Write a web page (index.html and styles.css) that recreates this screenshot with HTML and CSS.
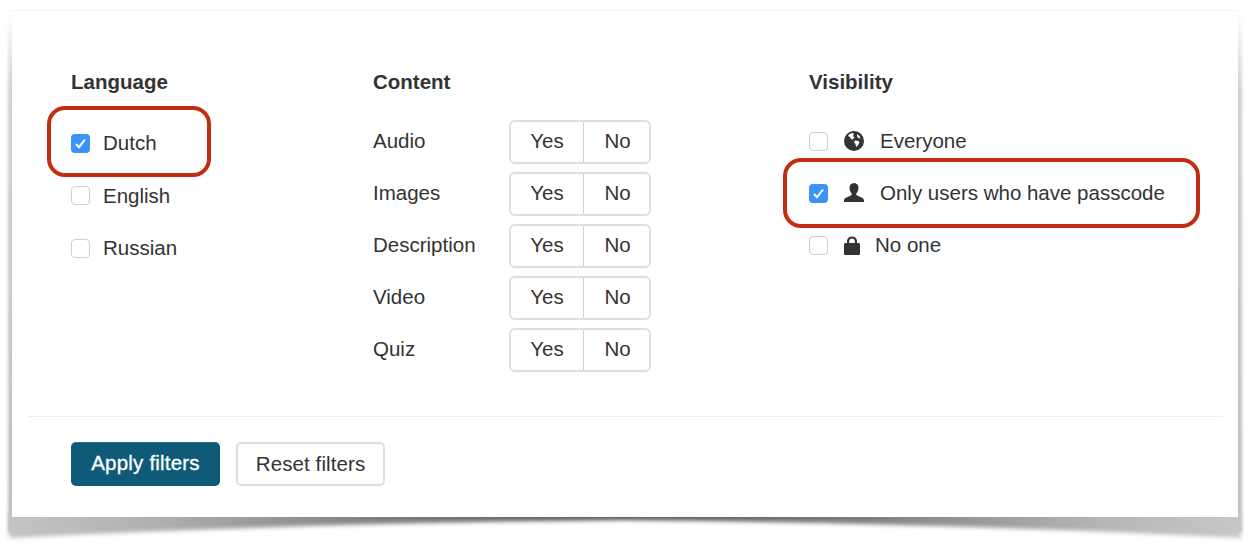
FILE: index.html
```html
<!DOCTYPE html>
<html lang="en">
<head>
<meta charset="utf-8">
<title>Filters</title>
<link rel="stylesheet" href="styles.css">
</head>
<body>
<div class="stage">
  <svg class="drop" width="1250" height="552" viewBox="0 0 1250 552" aria-hidden="true">
    <defs>
      <filter id="soft" x="-5%" y="-20%" width="110%" height="140%"><feGaussianBlur stdDeviation="2"/></filter>
      <filter id="softer" x="-100%" y="-5%" width="300%" height="110%"><feGaussianBlur stdDeviation="1.500"/></filter>
      <linearGradient id="fade" x1="0" x2="1" y1="0" y2="0">
        <stop offset="0" stop-color="#c4c4c4"/>
        <stop offset="0.12" stop-color="#b0b0b0"/>
        <stop offset="0.3" stop-color="#808080"/>
        <stop offset="0.5" stop-color="#505050"/>
        <stop offset="0.7" stop-color="#808080"/>
        <stop offset="0.88" stop-color="#b4b4b4"/>
        <stop offset="1" stop-color="#c8c8c8"/>
      </linearGradient>
      <linearGradient id="side" x1="0" x2="0" y1="0" y2="1">
        <stop offset="0" stop-color="#fff"/>
        <stop offset="0.15" stop-color="#d0d0d0"/>
        <stop offset="1" stop-color="#bdbdbd"/>
      </linearGradient>
    </defs>
    <rect x="8" y="12" width="6" height="520" fill="url(#side)" filter="url(#softer)"/>
    <rect x="1236" y="12" width="6" height="520" fill="url(#side)" filter="url(#softer)"/>
    <path d="M9 512 L9 538 Q300 523 625 520 Q950 523 1241 538 L1241 512 Z" fill="url(#fade)" filter="url(#soft)"/>
  </svg>
  <main class="card">
    <section class="filters">
      <div class="col">
        <h3 class="heading">Language</h3>
        <ul class="list list-lang">
          <li class="row"><span class="check on"><svg viewBox="0 0 19 19" width="19" height="19"><path d="M5 10l3 3.200 6-7.700" fill="none" stroke="#fff" stroke-width="2"/></svg></span><span class="label">Dutch</span></li>
          <li class="row"><span class="check"></span><span class="label">English</span></li>
          <li class="row"><span class="check"></span><span class="label">Russian</span></li>
        </ul>
      </div>
      <div class="col">
        <h3 class="heading">Content</h3>
        <ul class="list list-content">
          <li class="content-row"><span class="name">Audio</span><span class="toggle"><span class="yes">Yes</span><span class="no">No</span></span></li>
          <li class="content-row"><span class="name">Images</span><span class="toggle"><span class="yes">Yes</span><span class="no">No</span></span></li>
          <li class="content-row"><span class="name">Description</span><span class="toggle"><span class="yes">Yes</span><span class="no">No</span></span></li>
          <li class="content-row"><span class="name">Video</span><span class="toggle"><span class="yes">Yes</span><span class="no">No</span></span></li>
          <li class="content-row"><span class="name">Quiz</span><span class="toggle"><span class="yes">Yes</span><span class="no">No</span></span></li>
        </ul>
      </div>
      <div class="col">
        <h3 class="heading">Visibility</h3>
        <ul class="list list-vis">
          <li class="row vis"><span class="check"></span>
            <svg class="icon" width="20" height="20" viewBox="0 0 20 20"><circle cx="10" cy="10" r="10" fill="#333"/><path d="M5.500 3l3-1 1.500 1-1 2 1.500 1.500-2 2-1.500-.5-1-2L4 5zM11 9.500l3.500.5 1 1.500-2 3.500-1.500 1-.5-3-1.500-1.500zM13 3l2.500 2 1 2.500-2-.5-1.500-1.500z" fill="#fff"/></svg>
            <span class="label">Everyone</span></li>
          <li class="row vis"><span class="check on"><svg viewBox="0 0 19 19" width="19" height="19"><path d="M5 10l3 3.200 6-7.700" fill="none" stroke="#fff" stroke-width="2"/></svg></span>
            <svg class="icon" width="20" height="20" viewBox="0 0 20 20"><path d="M10 0c3 0 4.500 2.200 4.500 5 0 2.300-1 4-2 5.200-.6.800-.3 1.800.7 2.300l4.800 2.200c1.300.6 2 1.600 2 2.800V19H0v-1.500c0-1.200.7-2.200 2-2.800l4.800-2.200c1-.5 1.300-1.500.7-2.300-1-1.200-2-2.900-2-5.200C5.500 2.200 7 0 10 0z" fill="#333"/></svg>
            <span class="label">Only users who have passcode</span></li>
          <li class="row vis"><span class="check"></span>
            <svg class="icon icon-lock" width="16" height="19" viewBox="0 0 16 19"><path d="M3 7V5C3 2.300 5 .5 8 .5s5 1.800 5 4.500v2h1.500c.8 0 1.500.7 1.500 1.500v9c0 .8-.7 1.500-1.500 1.500h-13C.7 19 0 18.300 0 17.500v-9C0 7.700.7 7 1.500 7zm2.200 0h5.600V5C10.800 3.400 9.700 2.500 8 2.500S5.200 3.400 5.200 5z" fill="#333" fill-rule="evenodd"/></svg>
            <span class="label">No one</span></li>
        </ul>
      </div>
    </section>
    <hr class="rule">
    <footer class="actions">
      <button class="btn primary">Apply filters</button>
      <button class="btn">Reset filters</button>
    </footer>
    <div class="mark mark-lang"></div>
    <div class="mark mark-vis"></div>
  </main>
</div>
</body>
</html>
```
FILE: styles.css
```css
* { box-sizing: border-box; }
html, body { margin: 0; padding: 0; background: #fff; }
body {
  width: 1250px;
  height: 552px;
  overflow: hidden;
  font-family: "Liberation Sans", Arial, sans-serif;
  color: #333;
  font-size: 20.500px;
}
.stage { position: relative; padding: 10px 12px 0; height: 552px; }
.drop { position: absolute; left: 0; top: 0; }
.card {
  position: relative;
  width: 1226px;
  height: 507px;
  background: #fff;
  border-top: 1px solid #f4f4f4;
}
.filters {
  display: grid;
  grid-template-columns: 302px 436px 1fr;
  padding: 59px 0 0 59px;
  height: 405px;
}
.heading { margin: 0; font-size: 20.500px; line-height: 24px; font-weight: 700; color: #333; }
.list { list-style: none; margin: 0; padding: 0; }
.list-lang { padding-top: 23px; }
.list-content { padding-top: 22px; }
.list-vis { padding-top: 21px; }
.row { display: flex; align-items: center; height: 52.500px; }
.vis { height: 52px; }
.check {
  flex: none;
  width: 19px;
  height: 19px;
  border: 1.500px solid #cfcfcf;
  border-radius: 4px;
  background: #fff;
  overflow: hidden;
}
.check.on { background: #3b93f5; border: 0; }
.check svg { display: block; }
.label { margin-left: 13px; line-height: 24px; }
.icon { flex: none; margin-left: 16px; }
.vis .label { margin-left: 16px; }
.vis .icon-lock + .label { margin-left: 15px; }
.content-row { display: flex; align-items: center; height: 52px; }
.name { width: 136px; padding-bottom: 2px; }
.toggle {
  display: flex;
  width: 142px;
  height: 44px;
  border: 2px solid #dedede;
  border-radius: 6px;
  background: #fff;
}
.yes, .no { display: flex; align-items: center; justify-content: center; padding-bottom: 2px; }
.yes { width: 73px; border-right: 1.500px solid #d0d0d0; }
.no { flex: 1; padding-left: 2px; }
.rule { margin: 0 15px 0 16px; border: 0; border-top: 1px solid #eee; }
.actions { display: flex; gap: 16px; padding: 25px 0 0 59px; }
.btn {
  width: 149px;
  height: 44px;
  padding: 0;
  border: 2px solid #dedede;
  border-radius: 5px;
  background: #fff;
  color: #333;
  font: 20.500px "Liberation Sans", Arial, sans-serif;
  letter-spacing: .1px;
}
.btn.primary {
  background: #0f5a78;
  border: 0;
  border-top: 1px solid #2b7390;
  padding-bottom: 3px;
  color: #fff;
  letter-spacing: .2px;
  -webkit-text-stroke: .3px #fff;
}
.mark { position: absolute; border: 4px solid #c22c0f; border-radius: 18px; }
.mark-lang { left: 35px; top: 95px; width: 164px; height: 71px; }
.mark-vis { left: 771px; top: 147px; width: 417px; height: 70px; }
```
